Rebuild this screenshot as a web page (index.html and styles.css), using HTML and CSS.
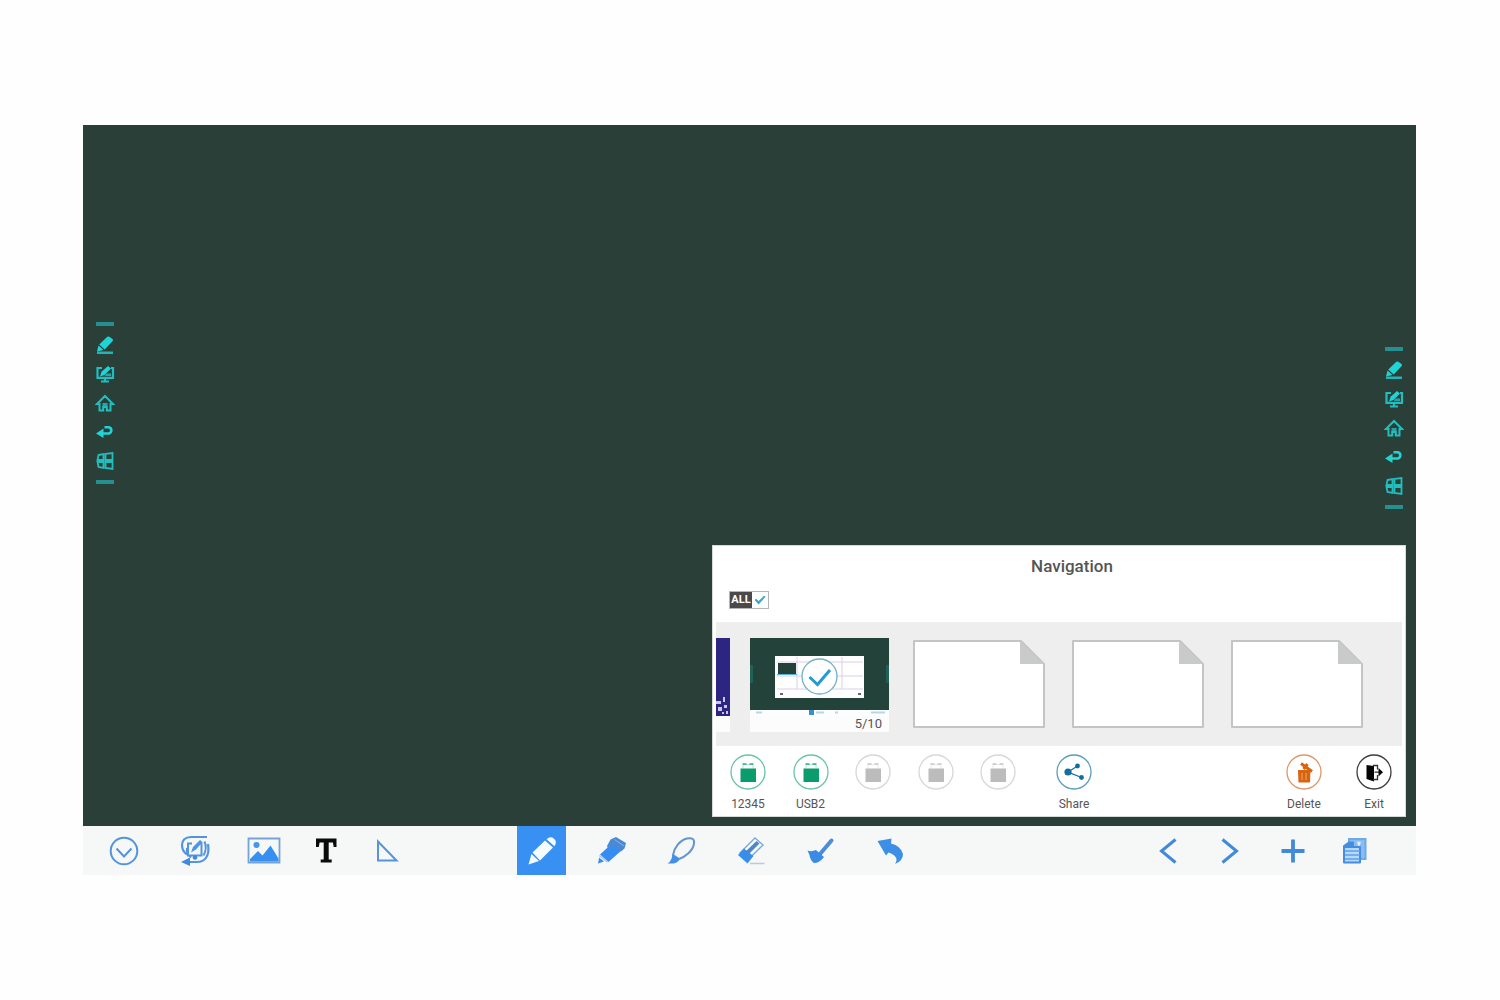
FILE: index.html
```html
<!DOCTYPE html>
<html lang="en">
<head>
<meta charset="utf-8">
<meta name="viewport" content="width=device-width, initial-scale=1">
<title>Whiteboard</title>
<link rel="stylesheet" href="styles.css">
</head>
<body>
<svg class="sprite" aria-hidden="true">
  <symbol id="pen" viewBox="0 0 20 20"><path d="M2 16.500h16v2.500H2z" fill="currentColor" opacity=".8"/><path d="M2 16.500l1.500-6 5 4.500zM4.300 9.500l7.700-7.500q1-.8 2-.5l3.500 2.500q1 1 .2 2l-8 8.500z" fill="currentColor"/></symbol>
  <symbol id="board" viewBox="0 0 20 20"><g fill="none" stroke="currentColor" stroke-width="2.200" opacity=".85"><path d="M7 4H2.500v9.800h15.500V4h-2"/><path d="M6 17.500h8M10 14v3"/></g><path d="M5 12.500l1.500-4.800L13 2l3 2.500-6.500 6.500z" fill="currentColor"/><path d="M11 9.500h5v2.500h-6z" fill="currentColor" opacity=".7"/></symbol>
  <symbol id="home" viewBox="0 0 20 20"><path d="M2 11L10 3l8 8h-2.500v6.500h-3.700v-3.500H8.200v3.500H4.500V11z" fill="none" stroke="currentColor" stroke-width="2" opacity=".85"/><path d="M7.500 10h5v3h-5z" fill="currentColor" opacity=".7"/></symbol>
  <symbol id="back" viewBox="0 0 20 20"><path d="M6 11.500h8a3.300 3.300 0 0 0 0-6.300H9.500" fill="none" stroke="currentColor" stroke-width="2.600"/><path d="M1 11.500l7.500-5v9.500z" fill="currentColor"/></symbol>
  <symbol id="windows" viewBox="0 0 20 20"><g fill="none" stroke="currentColor" stroke-width="1.800" opacity=".85"><path d="M3.500 4l5-1v6h-6zM10.500 2.800l7-.8v7h-7zM2.500 11h6v6l-5-1zM10.500 11h7v7l-7-1z"/></g></symbol>
  <symbol id="usb" viewBox="0 0 36 36"><circle cx="18" cy="18" r="17" fill="none" stroke="currentColor" stroke-width="1.300" opacity=".6"/><path d="M10.500 14.500h15.500V28H10.500z" fill="currentColor"/><path d="M13 14.500v-4h10v4" fill="none" stroke="currentColor" stroke-width="1" opacity=".3"/><path d="M12.500 10h4M19.500 10h4" stroke="currentColor" stroke-width="2" opacity=".6"/></symbol>
  <symbol id="sheet" viewBox="0 0 134 90"><path d="M2 2h107l23 23v63H2z" fill="#fff" stroke="#c3c4c4" stroke-width="2" stroke-linejoin="round"/><path d="M108 2l24 23h-24z" fill="#c9cbcb"/></symbol>
</svg>

<main class="app">
  <section class="canvas" aria-label="Canvas">
    <nav class="rail rail-left" aria-label="Left shortcuts">
      <span class="grip"></span>
      <button aria-label="Pen"><svg><use href="#pen"/></svg></button>
      <button aria-label="Whiteboard"><svg><use href="#board"/></svg></button>
      <button aria-label="Home"><svg><use href="#home"/></svg></button>
      <button aria-label="Back"><svg><use href="#back"/></svg></button>
      <button aria-label="Windows"><svg><use href="#windows"/></svg></button>
      <span class="grip"></span>
    </nav>
    <nav class="rail rail-right" aria-label="Right shortcuts">
      <span class="grip"></span>
      <button aria-label="Pen"><svg><use href="#pen"/></svg></button>
      <button aria-label="Whiteboard"><svg><use href="#board"/></svg></button>
      <button aria-label="Home"><svg><use href="#home"/></svg></button>
      <button aria-label="Back"><svg><use href="#back"/></svg></button>
      <button aria-label="Windows"><svg><use href="#windows"/></svg></button>
      <span class="grip"></span>
    </nav>

    <section class="panel" aria-labelledby="panel-title">
      <header class="panel-head">
        <h1 id="panel-title">Navigation</h1>
        <label class="select-all"><span>ALL</span><input type="checkbox" checked></label>
      </header>
      <div class="strip">
        <button class="sliver" aria-label="Page 4">
          <svg viewBox="0 0 14 78"><path d="M0 0h14v78H0z" fill="#2c2582"/><path d="M0 63h5v3H0zM7 59h2v5H7zM2 69h4v4H2zM8 67h3v3H8zM6 74h2v2H6zM10 73h2v3h-2z" fill="#c9c6e6"/></svg>
        </button>
        <button class="current" aria-label="Page 5 of 10">
          <svg viewBox="0 0 139 78">
            <path d="M0 0h139v78H0z" fill="#fcfdfd"/><path d="M0 0h139v72H0z" fill="#234239"/>
            <path d="M0 27h3v18H0zM136 27h3v18h-3z" fill="#216057"/>
            <path d="M25 18h89v42H25z" fill="#fff"/>
            <path d="M27 24h86M27 38h86M27 51h86M47 19v32M92 19v32" stroke="#d9cfe8" fill="none"/>
            <path d="M28 25h18v11H28z" fill="#234239"/><path d="M27 36.500h20" stroke="#55b5e0"/>
            <circle cx="69.500" cy="38.500" r="17.500" fill="#fff" stroke="#6fb0c6" stroke-width="1.300"/>
            <path d="M59.500 39l8 7.500L80 32" fill="none" stroke="#239bd3" stroke-width="3"/>
            <path d="M30 56h3M108 56h3" stroke="#666" stroke-width="2"/>
            <path d="M59 72h5v5h-5z" fill="#3c8ec6"/><path d="M6 74.500h6M66 74.500h8M85 74.500h3M121 74.500h14" stroke="#b4d8e8" stroke-width="2"/>
          </svg>
          <span>5/10</span>
        </button>
        <div class="blanks">
          <button aria-label="Page 6"><svg><use href="#sheet"/></svg></button>
          <button aria-label="Page 7"><svg><use href="#sheet"/></svg></button>
          <button aria-label="Page 8"><svg><use href="#sheet"/></svg></button>
        </div>
      </div>
      <footer class="actions">
        <div class="drives">
          <button class="action green"><svg><use href="#usb"/></svg><span>12345</span></button>
          <button class="action green"><svg><use href="#usb"/></svg><span>USB2</span></button>
          <button class="action off" aria-label="Empty drive 3"><svg><use href="#usb"/></svg></button>
          <button class="action off" aria-label="Empty drive 4"><svg><use href="#usb"/></svg></button>
          <button class="action off" aria-label="Empty drive 5"><svg><use href="#usb"/></svg></button>
        </div>
        <button class="action share">
          <svg viewBox="0 0 36 36"><circle cx="18" cy="18" r="17" fill="none" stroke="#5b9dbd" stroke-width="1.300"/><g fill="#136e9e"><circle cx="12" cy="18" r="3.600"/><circle cx="21.500" cy="12" r="2.400"/><circle cx="25.500" cy="23.500" r="2.400"/></g><path d="M21.500 12L12 18l13.500 5.500" fill="none" stroke="#136e9e" stroke-width="1.300"/></svg>
          <span>Share</span>
        </button>
        <div class="finish">
          <button class="action">
            <svg viewBox="0 0 36 36"><circle cx="18" cy="18" r="17" fill="none" stroke="#df9868" stroke-width="1.300"/><path d="M12 16h12.500l-.5 12.500H12.500z" fill="#d9640f"/><path d="M15 9.500l11 8M21.500 10l-4 5" stroke="#d9640f" stroke-width="3"/><path d="M16 19v7M20 19v7" stroke="#f0a56d"/></svg>
            <span>Delete</span>
          </button>
          <button class="action">
            <svg viewBox="0 0 36 36"><circle cx="18" cy="18" r="17" fill="none" stroke="#3d3d3d" stroke-width="1.300"/><path d="M10.500 11l7.500 1V27.500l-7.500-2.500z" fill="#050505"/><path d="M17 11.500h4.500v4M21.500 21v4.500H17M18.500 18.200h5" fill="none" stroke="#333" stroke-width="1.300"/><path d="M22.500 14l4.500 4.200-4.500 4.200z" fill="#050505"/></svg>
            <span>Exit</span>
          </button>
        </div>
      </footer>
    </section>
  </section>

  <div class="toolbar" role="toolbar" aria-label="Tools">
    <div class="group wide">
      <button class="tool" aria-label="Collapse"><svg viewBox="0 0 34 34"><g fill="none" stroke="#5295dc" stroke-width="2"><circle cx="17" cy="17" r="13.300"/><path d="M9.500 14.500l7.500 8 7.500-8"/></g></svg></button>
      <button class="tool" aria-label="Switch board"><svg viewBox="0 0 34 34"><g fill="none" stroke="#5295dc" stroke-width="2.200"><path d="M30 3H14C8 3 5 6.500 5 11q0 6 5 9.500M31 10c2 12-3 18-11 18h-8"/><path d="M15 9.500h-4v12h13.500v-12H23M10 14q-1 6 4 9.500M27.500 7.500q3 7-1 14" stroke-width="2"/></g><path d="M4 28l9-4.500V32z" fill="#3f8ae0"/><path d="M14 18.500l2-5.500 7-7 2.500 2-6.500 7.500z" fill="#4f95e4"/><circle cx="18" cy="23.500" r="2.300" fill="#3f8ae0"/></svg></button>
      <button class="tool" aria-label="Insert picture"><svg viewBox="0 0 34 34"><path d="M1.500 4.500h31v24h-31z" fill="none" stroke="#76a3d6" stroke-width="1.800"/><circle cx="9.500" cy="11" r="3" fill="#4b94e4"/><path d="M3 27.500v-2.500l8-8 4.500 4.500L23.500 11.500l8 13v3z" fill="#3690ef"/></svg></button>
    </div>
    <div class="group narrow">
      <button class="tool" aria-label="Text"><svg viewBox="0 0 34 34"><path d="M7 4.500h20.500V13h-2.800l-.8-4.500h-4.200v17h3v3h-11v-3h3v-17h-4.100L9.800 13H7z" fill="#0b0b0b"/></svg></button>
      <button class="tool" aria-label="Set square"><svg viewBox="0 0 34 34"><path d="M7 7.500l18.500 19H7z" fill="none" stroke="#5295dc" stroke-width="2"/></svg></button>
    </div>
    <div class="group wide pens">
      <button class="tool active" aria-label="Pencil" aria-pressed="true"><svg viewBox="0 0 34 34"><path d="M3.500 30.500l3-10.500 7.500 7zM7.500 18.500L20 6.500l8 7L15 26.500zM21.500 5.200q4-3.500 7.500-.5t.5 7.500z" fill="#f6fbff"/></svg></button>
      <button class="tool" aria-label="Marker"><svg viewBox="0 0 34 34"><path d="M3 29.500l1.200-6L9 27.500zM5 20.500L17 9.500l10.500 6L13.500 28z" fill="#378cf1"/><path d="M4.300 21.500l8 6.500" stroke="#9cc8f6" stroke-width="1.200"/><path d="M12 12l3.500-6.500L21 3l10 6-1.500 5.500-3.500 3-9-6.500-4 3.500z" fill="#4b89d3"/><path d="M19.500 5.500l9.500 6.500" stroke="#86b5ea"/></svg></button>
      <button class="tool" aria-label="Brush pen"><svg viewBox="0 0 34 34"><path d="M8 21C9 14 15 6 22 4.500q8-1.500 7 5C28 17 20 23 14 25z" fill="none" stroke="#6196d2" stroke-width="2"/><path d="M2.500 29.500q4-2 5-9l7 5q-2 3.500-6 4z" fill="#438fe5"/></svg></button>
      <button class="tool" aria-label="Eraser"><svg viewBox="0 0 34 34"><path d="M5 19L20 4l8 7-15.500 15z" fill="#fff" stroke="#7aa8d9" stroke-width="1.400"/><path d="M3 21l6-6.500 9.500 7.500-6 7.500z" fill="#388eec"/><path d="M10 18L21.500 7l3 2.500-12 12z" fill="#4b89cc"/><path d="M15 29.500h14.500" stroke="#bdcad9" stroke-width="1.500"/></svg></button>
      <button class="tool" aria-label="Clear"><svg viewBox="0 0 34 34"><path d="M15 20L26.500 6.500" stroke="#4c8cda" stroke-width="4" stroke-linecap="round"/><path d="M2.500 16.500q4 1.500 8.500-.5l8 7Q14.500 29 9 29 5 26 4.500 21z" fill="#3a8be6"/></svg></button>
      <button class="tool" aria-label="Undo"><svg viewBox="0 0 34 34"><path d="M2.500 7L16.500 4.500l-.5 5Q26 12 28 20q0 7-8 10 5-7.500-6.500-11.500l-2.500 3z" fill="#3d8ee7"/></svg></button>
    </div>
    <div class="group narrow paging">
      <button class="tool" aria-label="Previous page"><svg viewBox="0 0 34 34"><path d="M23.500 5.500L9.500 17l14 11.500" fill="none" stroke="#4189d9" stroke-width="3"/></svg></button>
      <button class="tool" aria-label="Next page"><svg viewBox="0 0 34 34"><path d="M8.500 5.500l14 11.500-14 11.500" fill="none" stroke="#4189d9" stroke-width="3"/></svg></button>
      <button class="tool" aria-label="Add page"><svg viewBox="0 0 34 34"><path d="M17 5.500v23M5.500 17h23" stroke="#4189d9" stroke-width="3.800"/></svg></button>
      <button class="tool" aria-label="Pages"><svg viewBox="0 0 34 34"><path d="M11 8V5h16.500v20H23" fill="#8bbcf1" stroke="#6fa9e6" stroke-width="2"/><path d="M19 7.500l4 .5-2.500 6z" fill="#e3f0fe"/><path d="M6 12l5-3.500h4V13h7v15.500H6z" fill="#b7d8fb" stroke="#438ee0" stroke-width="2" stroke-linejoin="round"/><path d="M6 12l5-4h4.500v6H6z" fill="#438ee0"/><path d="M7 17h15M7 21h15M7 25h15" stroke="#5c9fe8" stroke-width="1.500"/></svg></button>
    </div>
  </div>
</main>
</body>
</html>
```
FILE: styles.css
```css
* { box-sizing: border-box; }

body {
  display: flex;
  min-height: 100vh;
  margin: 0;
  padding: 125px 84px 125px 83px;
  background: #fefefe;
  font-family: Roboto, "Liberation Sans", sans-serif;
  color: #555;
}

button {
  margin: 0;
  padding: 0;
  border: 0;
  background: none;
  font: inherit;
  color: inherit;
}

svg { display: block; }

.sprite {
  position: absolute;
  width: 0;
  height: 0;
}

.app {
  display: flex;
  flex: 1;
  flex-direction: column;
}

.canvas {
  position: relative;
  flex: 1;
  min-height: 500px;
  background: #293f38;
}

/* Floating shortcut rails */
.rail {
  position: absolute;
  display: flex;
  flex-direction: column;
  gap: 9px;
  width: 20px;
  color: #22d3d6;
}

.rail-left { top: 197px; left: 12px; }
.rail-right { top: 222px; right: 12px; }

.rail button,
.rail svg {
  width: 20px;
  height: 20px;
}

.grip {
  height: 4px;
  margin: 0 1px;
  background: #25908f;
}

/* Navigation panel */
.panel {
  position: absolute;
  right: 10px;
  bottom: 9px;
  width: 694px;
  max-width: 100%;
  background: #fff;
  border: 1px solid #d5dad8;
}

.panel-head {
  display: flex;
  flex-direction: column;
  gap: 15px;
  height: 76px;
  padding: 10px 16px 0;
}

.panel-head h1 {
  margin: 0;
  padding-left: 26px;
  font-size: 17px;
  font-weight: 500;
  line-height: 20px;
  text-align: center;
}

.select-all {
  display: flex;
  align-self: flex-start;
  height: 18px;
  border: 1px solid #b5b5b5;
  font-size: 11px;
  font-weight: 700;
  line-height: 16px;
}

.select-all span {
  width: 22px;
  background: #4a4a4a;
  color: #fff;
  text-align: center;
}

.select-all input {
  display: grid;
  place-items: center;
  width: 16px;
  height: 16px;
  margin: 0;
  appearance: none;
  background: #fff;
}

.select-all input:checked::before {
  content: "";
  width: 11px;
  height: 9px;
  background: #36a9cc;
  clip-path: polygon(0 50%, 15% 35%, 38% 62%, 88% 0, 100% 14%, 38% 100%);
}

.strip {
  display: flex;
  align-items: flex-start;
  height: 124px;
  margin: 0 3px;
  padding-top: 16px;
  overflow: hidden;
  background: #eee;
}

.sliver,
.current {
  display: flex;
  flex-direction: column;
  height: 94px;
  background: #fcfcfc;
}

.sliver { width: 14px; }

.current {
  width: 139px;
  margin-left: 20px;
}

.sliver svg,
.current svg {
  width: 100%;
  height: 78px;
}

.current span {
  align-self: flex-end;
  padding-right: 7px;
  font-size: 13px;
  line-height: 16px;
}

.blanks {
  display: flex;
  gap: 25px;
  margin: 1px 0 0 23px;
}

.blanks svg {
  width: 134px;
  height: 90px;
}

.actions {
  display: flex;
  align-items: flex-start;
  height: 70px;
  padding: 8px 6px 0 10px;
}

.drives {
  display: flex;
  justify-content: space-between;
  width: 300px;
}

.action {
  display: flex;
  flex-direction: column;
  align-items: center;
  gap: 6px;
  width: 50px;
  font-size: 12px;
  line-height: 16px;
}

.action svg {
  width: 36px;
  height: 36px;
}

.green svg { color: #0a9c6c; }
.off svg { color: #b5b5b5; }
.off { opacity: 0.9; }
.share { margin-left: 26px; }

.finish {
  display: flex;
  gap: 20px;
  margin-left: auto;
}

/* Bottom toolbar */
.toolbar {
  display: flex;
  height: 49px;
  padding: 0 37px 0 16px;
  background: #f6f7f7;
}

.group { display: flex; }
.wide { gap: 21px; }
.narrow { gap: 13px; margin-left: 13px; }
.pens { margin-left: 105px; }
.paging { margin-left: auto; }

.tool {
  display: grid;
  place-items: center;
  width: 49px;
  height: 49px;
}

.tool svg {
  width: 34px;
  height: 34px;
}

.active { background: #3990f3; }
```
